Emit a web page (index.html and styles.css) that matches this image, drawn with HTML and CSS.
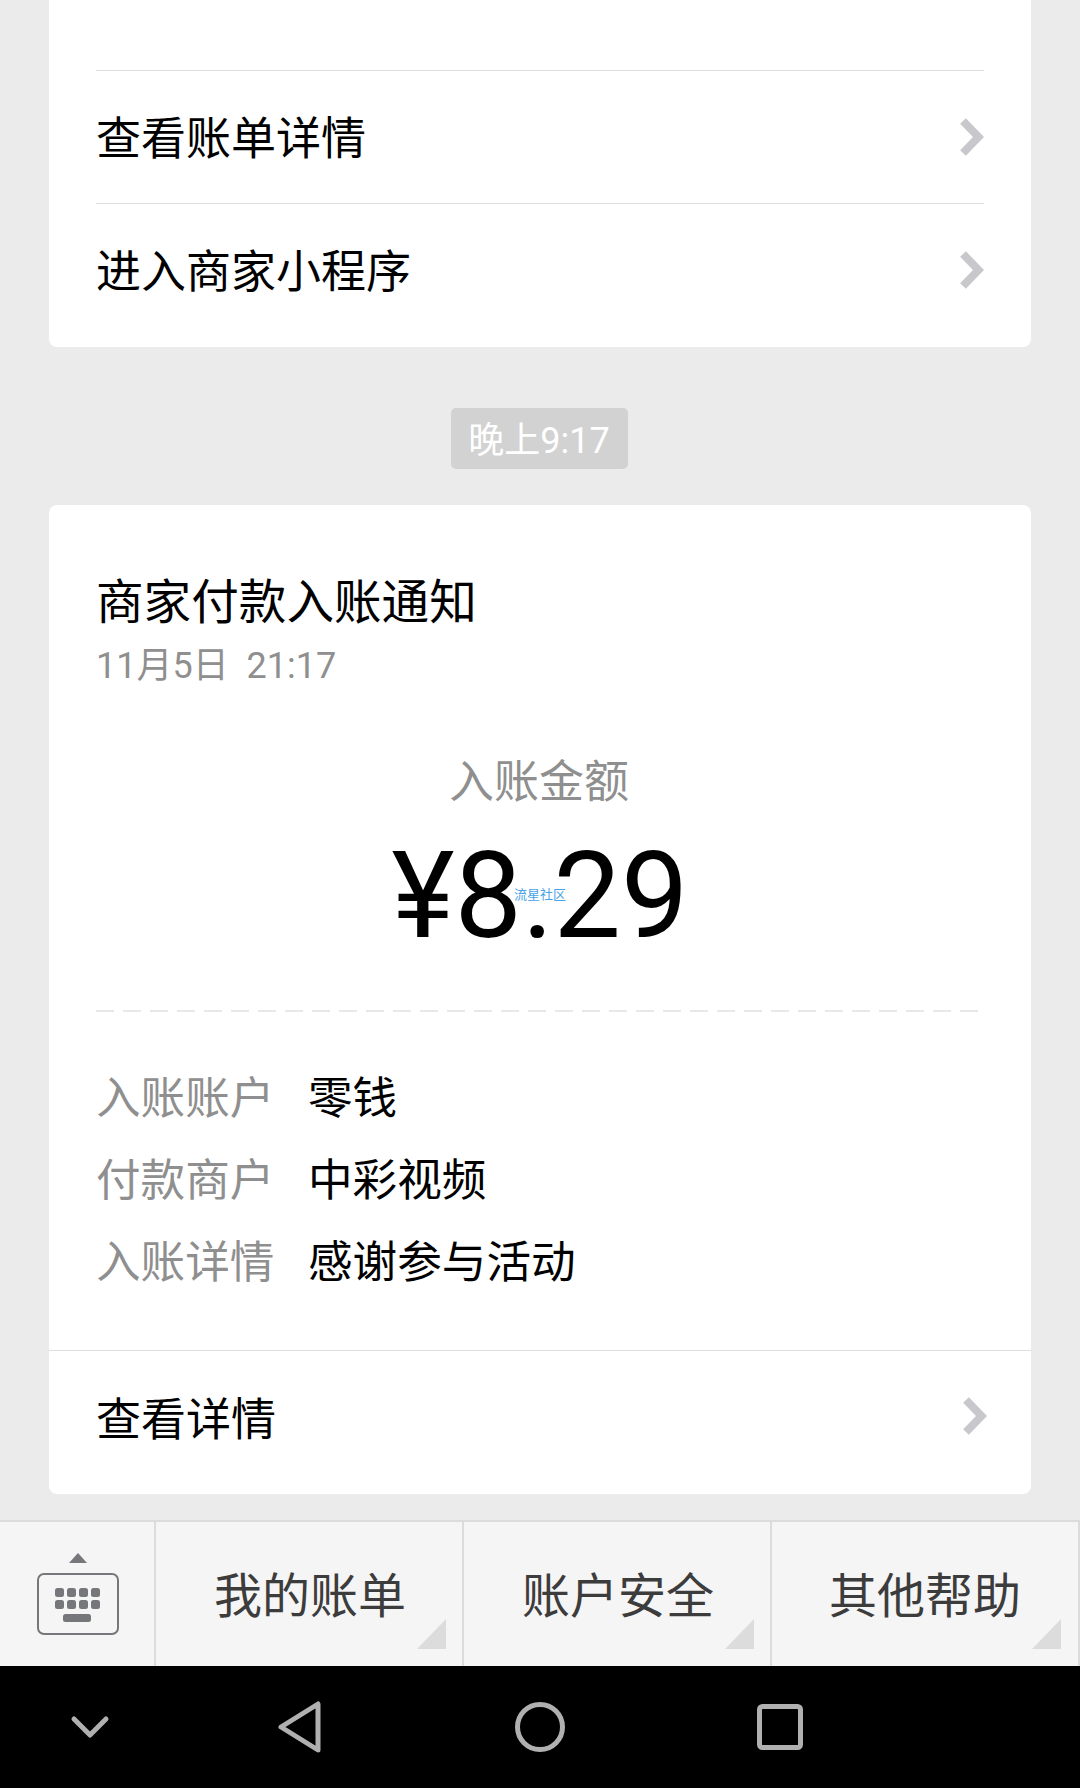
FILE: index.html
```html
<!DOCTYPE html>
<html lang="zh-CN">
<head>
    <meta charset="UTF-8">
    <meta name="viewport" content="width=device-width, initial-scale=1.0">
    <title>微信支付</title>
    <link rel="stylesheet" href="styles.css">
</head>
<body>
    <div class="chat">
        <div class="card card-prev">
            <div class="link-row">
                <span>查看账单详情</span>
                <svg class="chevron" viewBox="0 0 24 38"><polyline points="3,3 18.5,19 3,35"/></svg>
            </div>
            <div class="link-row">
                <span>进入商家小程序</span>
                <svg class="chevron" viewBox="0 0 24 38"><polyline points="3,3 18.5,19 3,35"/></svg>
            </div>
        </div>

        <div class="time-wrap"><span class="time">晚上9:17</span></div>

        <div class="card card-notice">
            <h2 class="notice-title">商家付款入账通知</h2>
            <p class="notice-date">11月5日&nbsp;&nbsp;21:17</p>
            <p class="amount-label">入账金额</p>
            <div class="amount">¥8.29<span class="watermark">流星社区</span></div>
            <div class="dash"></div>
            <div class="detail-row"><span class="detail-key">入账账户</span><span>零钱</span></div>
            <div class="detail-row"><span class="detail-key">付款商户</span><span>中彩视频</span></div>
            <div class="detail-row"><span class="detail-key">入账详情</span><span>感谢参与活动</span></div>
            <div class="more-row">
                <span>查看详情</span>
                <svg class="chevron" viewBox="0 0 24 38"><polyline points="3,3 18.5,19 3,35"/></svg>
            </div>
        </div>
    </div>

    <div class="menu">
        <div class="menu-keyboard">
            <svg class="keyboard-icon" viewBox="0 0 84 84">
                <path class="kb-fill" d="M42 0 L51 10 L33 10 Z"/>
                <rect class="kb-box" x="2" y="21" width="80" height="60" rx="6"/>
                <g class="kb-fill">
                    <rect x="19" y="35" width="9" height="9" rx="2.5"/>
                    <rect x="31" y="35" width="9" height="9" rx="2.5"/>
                    <rect x="43" y="35" width="9" height="9" rx="2.5"/>
                    <rect x="55" y="35" width="9" height="9" rx="2.5"/>
                    <rect x="19" y="47" width="9" height="9" rx="2.5"/>
                    <rect x="31" y="47" width="9" height="9" rx="2.5"/>
                    <rect x="43" y="47" width="9" height="9" rx="2.5"/>
                    <rect x="55" y="47" width="9" height="9" rx="2.5"/>
                    <rect x="27" y="61" width="28" height="8" rx="2.5"/>
                </g>
            </svg>
        </div>
        <div class="menu-item">我的账单<i class="corner"></i></div>
        <div class="menu-item">账户安全<i class="corner"></i></div>
        <div class="menu-item">其他帮助<i class="corner"></i></div>
    </div>

    <div class="navbar">
        <svg class="nav-icon" width="42" height="26" viewBox="0 0 42 26"><polyline points="5,5 21,21 37,5"/></svg>
        <svg class="nav-icon" width="46" height="54" viewBox="0 0 46 54"><path d="M41 4 L41 50 L4 27 Z"/></svg>
        <svg class="nav-icon" width="52" height="52" viewBox="0 0 52 52"><circle cx="26" cy="26" r="22.5"/></svg>
        <svg class="nav-icon" width="46" height="46" viewBox="0 0 46 46"><rect x="2.5" y="2.5" width="41" height="41" rx="3"/></svg>
    </div>
</body>
</html>
```

FILE: styles.css
```css
* {
    box-sizing: border-box;
}

body {
    margin: 0;
    width: 1080px;
    height: 1788px;
    overflow: hidden;
    background-color: #ebebeb;
    font-family: Roboto, "Noto Sans CJK SC", sans-serif;
    color: #000;
}

.chat {
    height: 1520px;
    padding: 0 49px;
    overflow: hidden;
}

.card {
    background-color: white;
    border-radius: 8px;
}

.card-prev {
    height: 347px;
    padding: 70px 47px 0 47px;
    border-radius: 0 0 8px 8px;
}

.link-row {
    display: flex;
    justify-content: space-between;
    align-items: center;
    height: 133px;
    border-top: 1px solid #dedede;
    font-size: 45px;
}

.link-row span {
    padding-bottom: 4px;
}

.chevron {
    width: 24px;
    height: 38px;
    fill: none;
    stroke: #c8c8cc;
    stroke-width: 8;
}

.time-wrap {
    display: flex;
    justify-content: center;
    margin: 61px 2px 36px 0;
}

.time {
    display: block;
    width: 177px;
    height: 61px;
    line-height: 66px;
    text-align: center;
    background-color: #d2d2d2;
    border-radius: 5px;
    color: white;
    font-size: 36px;
}

.card-notice {
    height: 989px;
    padding-top: 66px;
}

.notice-title {
    margin: 0 0 0 47px;
    height: 64px;
    line-height: 64px;
    font-size: 47.6px;
    font-weight: normal;
}

.notice-date {
    margin: 0 0 0 47px;
    height: 62px;
    line-height: 62px;
    font-size: 36px;
    color: #8f8f8f;
}

.amount-label {
    margin: 56px 2px 0 0;
    height: 60px;
    line-height: 60px;
    text-align: center;
    font-size: 45px;
    color: #8f8f8f;
}

.amount {
    position: relative;
    height: 140px;
    margin-top: 13px;
    line-height: 140px;
    text-align: center;
    font-size: 120px;
}

.watermark {
    position: absolute;
    left: 465px;
    top: 61px;
    line-height: 16px;
    font-size: 13px;
    color: #4aa3e8;
}

.dash {
    height: 2px;
    margin: 44px 50px 0 47px;
    background-image: repeating-linear-gradient(to right, #e8e8e8 0, #e8e8e8 18px, transparent 18px, transparent 27px);
}

.detail-row {
    display: flex;
    height: 82px;
    line-height: 82px;
    padding-left: 47px;
    font-size: 44.6px;
}

.dash + .detail-row {
    margin-top: 46px;
}

.detail-key {
    width: 212px;
    color: #8f8f8f;
}

.more-row {
    display: flex;
    justify-content: space-between;
    align-items: center;
    height: 143px;
    margin-top: 46px;
    padding: 0 44px 12px 47px;
    border-top: 1px solid #dedede;
    font-size: 45px;
}

.menu {
    display: flex;
    height: 146px;
    background-color: #f5f5f5;
    border-top: 2px solid #dcdcdc;
}

.menu-keyboard {
    width: 154px;
    padding: 31px 0 0 36px;
}

.keyboard-icon {
    display: block;
    width: 84px;
    height: 84px;
}

.kb-box {
    fill: none;
    stroke: #75777a;
    stroke-width: 2;
}

.kb-fill {
    fill: #75777a;
}

.menu-item {
    position: relative;
    width: 308px;
    padding: 0 0 4px 2px;
    display: flex;
    justify-content: center;
    align-items: center;
    border-left: 2px solid #dcdcdc;
    font-size: 48px;
    color: #3c3c3c;
}

.menu-item:last-child {
    width: 310px;
    padding-right: 2px;
    border-right: 2px solid #dcdcdc;
}

.corner {
    position: absolute;
    right: 16px;
    bottom: 17px;
    width: 0;
    height: 0;
    border-style: solid;
    border-width: 0 0 30px 29px;
    border-color: transparent transparent #dcdcdc transparent;
}

.menu-item:last-child .corner {
    right: 17px;
}

.navbar {
    position: relative;
    height: 122px;
    background-color: black;
    display: grid;
    grid-template-columns: 180px 240px 240px 240px;
    justify-items: center;
    align-items: center;
}

.nav-icon {
    fill: none;
    stroke: #b0b0b0;
    stroke-width: 5;
    stroke-linejoin: round;
    stroke-linecap: round;
}
```
